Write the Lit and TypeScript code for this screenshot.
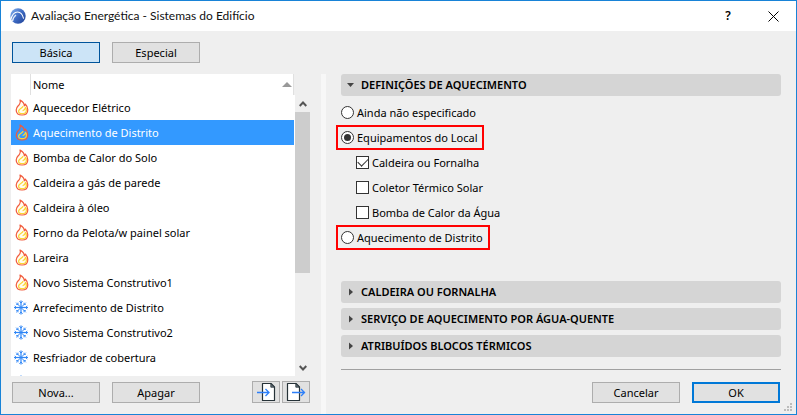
import { LitElement, html, svg, css } from "lit";
import { customElement, state } from "lit/decorators.js";
import { classMap } from "lit/directives/class-map.js";

type Kind = "heat" | "cool";
interface SystemRow {
  name: string;
  kind: Kind;
}

const SYSTEMS: SystemRow[] = [
  { name: "Aquecedor Elétrico", kind: "heat" },
  { name: "Aquecimento de Distrito", kind: "heat" },
  { name: "Bomba de Calor do Solo", kind: "heat" },
  { name: "Caldeira a gás de parede", kind: "heat" },
  { name: "Caldeira à óleo", kind: "heat" },
  { name: "Forno da Pelota/w painel solar", kind: "heat" },
  { name: "Lareira", kind: "heat" },
  { name: "Novo Sistema Construtivo1", kind: "heat" },
  { name: "Arrefecimento de Distrito", kind: "cool" },
  { name: "Novo Sistema Construtivo2", kind: "cool" },
  { name: "Resfriador de cobertura", kind: "cool" },
  { name: "", kind: "cool" },
];

const flame = (selected: boolean) => html`<svg width="14" height="17" viewBox="0 0 14 17" aria-hidden="true">
  <path d="M5 1C8 2.600 9.300 4.800 9.300 6.800C10 6.400 10.200 5.800 10.200 5C12 6.800 12.800 8.800 12.800 10.700C12.800 14 10.400 16 7 16C3.600 16 1.200 14 1.200 10.900C1.200 8.200 3 7 4.500 5.300C5.600 3.900 5.600 2.600 5 1Z"
    fill="${selected ? "#3399ff" : "#fffdf0"}" stroke="#f15a3c" stroke-width="1.200" stroke-linejoin="round"/>
  <path d="M8 7C8 9.200 4.200 9.400 3.600 12C3.600 13.700 5 14.700 7 14.700C9.600 14.700 11.400 13.200 11.400 10.900C11.400 9.900 11 9 10.500 8.400C10.300 10.200 9.500 11.200 7.600 11.800"
    fill="none" stroke="#fbd536" stroke-width="1.200" stroke-linejoin="round"/>
</svg>`;

const flake = html`<svg width="14" height="15" viewBox="0 0 14 15" aria-hidden="true">
  <g fill="none" stroke="#2f86f6">
    ${[0, 90, 180, 270].map(
      (a) => svg`<g transform="rotate(${a} 7 7.500)">
        <path stroke-width="1.200" d="M7 7.500V0.500"/>
        <path stroke-width="0.900" d="M5.300 1.300L7 3L8.700 1.300"/>
        <path stroke-width="1" d="M7 7.500L11.800 2.700"/>
        <path stroke-width="0.800" d="M10 2.600V4.500H11.900"/>
      </g>`
    )}
  </g>
</svg>`;

const pageIcon = (out: boolean) => html`<svg width="20" height="20" viewBox="0 0 20 20" aria-hidden="true">
  <path d="${out ? "M1.500 1.500H10L13.500 5V18.500H1.500Z" : "M6.500 1.500H15L18.500 5V18.500H6.500Z"}"
    fill="#fff" stroke="#263238" stroke-width="1.200" stroke-linejoin="round"/>
  <path d="${out ? "M9.800 1.500V5.200H13.500Z" : "M14.800 1.500V5.200H18.500Z"}" fill="#67727a" stroke="#263238" stroke-width="0.800"/>
  <path d="${out ? "M6 10.500H18.500M15 7L18.500 10.500L15 14" : "M1 10.500H13M9.500 7L13 10.500L9.500 14"}"
    fill="none" stroke="#2d7ff9" stroke-width="1.300"/>
</svg>`;

const logo = html`<svg width="16" height="16" viewBox="0 0 16 16" aria-hidden="true">
  <defs>
    <linearGradient id="globe" x1="0" y1="0" x2="1" y2="0.800">
      <stop offset="0" stop-color="#86b4f0"/>
      <stop offset="0.550" stop-color="#3f6cc4"/>
      <stop offset="1" stop-color="#23469c"/>
    </linearGradient>
  </defs>
  <circle cx="8" cy="8" r="7.700" fill="url(#globe)"/>
  <path d="M0.800 11.500C2 6.800 4.600 4 7.600 4C10.800 4 12.600 6.600 13.600 10.600" fill="none" stroke="#fff" stroke-width="1.100"/>
  <path d="M2.400 13.400C3 10.500 4.200 8.200 6 7" fill="none" stroke="#e4ecf9" stroke-width="1.400"/>
</svg>`;

@customElement("app-root")
export class AppRoot extends LitElement {
  @state() private selected = 1;
  @state() private source = "local";

  static styles = css`
    :host {
      display: block;
      font: 11px/16px "Noto Sans", "Open Sans", sans-serif;
      color: #000;
    }
    * { box-sizing: border-box; }
    svg { display: block; flex: none; }
    button, input { font: inherit; color: inherit; margin: 0; padding: 0; }
    .dialog {
      position: relative;
      display: flex;
      flex-direction: column;
      height: 100vh;
      border: 1px solid #1883d7;
      background: #efefef;
    }
    .titlebar {
      display: flex;
      align-items: center;
      flex: none;
      gap: 5px;
      height: 30px;
      padding: 0 11px 0 9px;
      background: #fff;
    }
    .title { flex: 1; margin: 0; font-family: Lato, "Noto Sans", sans-serif; font-size: 12px; font-weight: 400; color: #111; }
    .caption {
      display: grid;
      place-items: center;
      width: 24px;
      height: 24px;
      border: 0;
      background: none;
      font-size: 12px;
      font-weight: 600;
    }
    .captions { display: flex; gap: 21px; }
    .content { display: flex; flex: 1; min-height: 0; }
    .left {
      display: flex;
      flex-direction: column;
      flex: none;
      width: 320px;
      padding: 11px 11px 11px 10px;
    }
    .right {
      display: flex;
      flex-direction: column;
      flex: 1;
      min-width: 0;
      padding: 43px 15px 11px 15px;
    }
    .divider { flex: none; width: 5px; margin-top: 43px; background: #f7f7f7; }
    .row { display: flex; align-items: flex-end; gap: 12px; padding-left: 1px; }
    .btn {
      width: 88px;
      height: 21px;
      border: 1px solid #adadad;
      background: #e1e1e1;
      line-height: 16px;
    }
    .btn.active { border-color: #00549b; background: #cce4f7; }
    .btn.primary { border: 2px solid #0078d7; }
    .list { display: flex; flex: 1; min-height: 0; margin: 11px 0 5px; }
    .viewport { flex: 1; overflow: hidden; background: #fff; }
    table { width: 100%; border-collapse: separate; border-spacing: 0; table-layout: fixed; }
    th, td { padding: 0; text-align: left; font-weight: 400; white-space: nowrap; }
    th { height: 21px; border-right: 1px solid #e0e0e0; }
    td { height: 25px; }
    .icon-col { width: 20px; }
    td.icon-col { padding-left: 3px; }
    td.heat { padding-left: 4px; }
    .name-col { padding-left: 2px; }
    .head { display: flex; align-items: center; justify-content: space-between; padding-right: 1px; }
    tr.selected { background: #3399ff; color: #fff; }
    .scrollbar {
      display: flex;
      flex-direction: column;
      width: 16px;
      margin-top: 21px;
      border-left: 1px solid #fff;
    }
    .arrow { display: grid; place-items: center; height: 17px; }
    .track { flex: 1; }
    .thumb { height: 65%; background: #cdcdcd; }
    .tools { display: flex; gap: 2px; margin-left: auto; }
    .tool {
      display: grid;
      place-items: center;
      width: 28px;
      height: 22px;
      border: 1px solid #adadad;
      background: #e1e1e1;
    }
    .section {
      display: flex;
      align-items: center;
      flex: none;
      gap: 7px;
      width: 100%;
      height: 22px;
      padding: 0 6px;
      border: 0;
      border-radius: 3px;
      background: #d5d5d5;
      font-weight: 600;
      text-align: left;
    }
    .options {
      display: flex;
      flex-direction: column;
      align-items: flex-start;
      margin: 4px 0 0 -5px;
      padding: 0;
      border: 0;
    }
    .option {
      display: flex;
      align-items: center;
      gap: 3px;
      height: 25px;
      padding: 0 5px 0 3px;
      border: 2px solid transparent;
    }
    .option.marked { border-color: #ff0000; }
    .option.nested { margin-left: 15px; }
    .mark {
      appearance: none;
      display: grid;
      place-items: center;
      flex: none;
      width: 13px;
      height: 13px;
      border: 1px solid #333;
      background: #fff;
    }
    .mark[type="radio"] { border-radius: 50%; }
    .mark[type="radio"]:checked::before {
      content: "";
      width: 7px;
      height: 7px;
      border-radius: 50%;
      background: #333;
    }
    .mark[type="checkbox"]:checked::before {
      content: "";
      width: 9px;
      height: 5px;
      margin-bottom: 3px;
      border: solid #333;
      border-width: 0 0 1px 1px;
      transform: rotate(-45deg);
    }
    .sections { display: flex; flex-direction: column; gap: 5px; margin-top: auto; }
    .rule { width: 100%; height: 1px; margin: 12px 0; border: 0; background: #a0a0a0; }
    .footer { display: flex; justify-content: flex-end; gap: 12px; padding-right: 1px; }
    .grip { position: absolute; right: 4px; bottom: 3px; }
  `;

  private section(label: string, open = false) {
    return html`<button class="section" aria-expanded=${open ? "true" : "false"}>
      <svg width="7" height="8" viewBox="0 0 7 8" aria-hidden="true">
        <path d=${open ? "M0 2H7L3.5 6Z" : "M2 0.500V7.500L6 4Z"} fill="#444"/>
      </svg>
      <span>${label}</span>
    </button>`;
  }

  private radio(value: string, label: string, marked = false) {
    return html`<label class=${classMap({ option: true, marked })}>
      <input class="mark" type="radio" name="source" .checked=${this.source === value}
        @change=${() => (this.source = value)} />
      <span>${label}</span>
    </label>`;
  }

  private check(label: string, checked = false) {
    return html`<label class="option nested">
      <input class="mark" type="checkbox" ?checked=${checked} />
      <span>${label}</span>
    </label>`;
  }

  render() {
    return html`
      <div class="dialog" role="dialog" aria-labelledby="title">
        <header class="titlebar">
          ${logo}
          <h1 class="title" id="title">Avaliação Energética - Sistemas do Edifício</h1>
          <div class="captions">
            <button class="caption">?</button>
            <button class="caption" aria-label="Fechar">
              <svg width="11" height="11" viewBox="0 0 11 11"><path d="M0.500 0.500L10.500 10.500M10.500 0.500L0.500 10.500" stroke="#000"/></svg>
            </button>
          </div>
        </header>
        <div class="content">
          <section class="left">
            <div class="row">
              <button class="btn active">Básica</button>
              <button class="btn">Especial</button>
            </div>
            <div class="list">
              <div class="viewport">
                <table>
                  <thead>
                    <tr>
                      <th class="icon-col"></th>
                      <th class="name-col">
                        <div class="head">
                          <span>Nome</span>
                          <svg width="10" height="5" viewBox="0 0 10 5" aria-hidden="true"><path d="M0 5L5 0L10 5Z" fill="#999"/></svg>
                        </div>
                      </th>
                    </tr>
                  </thead>
                  <tbody>
                    ${SYSTEMS.map(
                      (s, i) => html`<tr class=${classMap({ selected: i === this.selected })} @click=${() => (this.selected = i)}>
                        <td class="icon-col ${s.kind}">${s.kind === "heat" ? flame(i === this.selected) : flake}</td>
                        <td class="name-col">${s.name}</td>
                      </tr>`
                    )}
                  </tbody>
                </table>
              </div>
              <div class="scrollbar" aria-hidden="true">
                <div class="arrow">
                  <svg width="8" height="6" viewBox="0 0 8 6"><path d="M0.700 5L4 1.500L7.300 5" fill="none" stroke="#555" stroke-width="2"/></svg>
                </div>
                <div class="track"><div class="thumb"></div></div>
                <div class="arrow">
                  <svg width="8" height="6" viewBox="0 0 8 6"><path d="M0.700 1L4 4.500L7.300 1" fill="none" stroke="#555" stroke-width="2"/></svg>
                </div>
              </div>
            </div>
            <div class="row">
              <button class="btn">Nova...</button>
              <button class="btn">Apagar</button>
              <div class="tools">
                <button class="tool" aria-label="Importar">${pageIcon(false)}</button>
                <button class="tool" aria-label="Exportar">${pageIcon(true)}</button>
              </div>
            </div>
          </section>
          <div class="divider"></div>
          <section class="right">
            ${this.section("DEFINIÇÕES DE AQUECIMENTO", true)}
            <fieldset class="options">
              ${this.radio("none", "Ainda não especificado")}
              ${this.radio("local", "Equipamentos do Local", true)}
              ${this.check("Caldeira ou Fornalha", true)}
              ${this.check("Coletor Térmico Solar")}
              ${this.check("Bomba de Calor da Água")}
              ${this.radio("district", "Aquecimento de Distrito", true)}
            </fieldset>
            <div class="sections">
              ${this.section("CALDEIRA OU FORNALHA")}
              ${this.section("SERVIÇO DE AQUECIMENTO POR ÁGUA-QUENTE")}
              ${this.section("ATRIBUÍDOS BLOCOS TÉRMICOS")}
            </div>
            <hr class="rule" />
            <div class="footer">
              <button class="btn">Cancelar</button>
              <button class="btn primary">OK</button>
            </div>
          </section>
        </div>
        <svg class="grip" width="8" height="8" viewBox="0 0 8 8" aria-hidden="true">
          <path d="M6 0h2v2h-2zM6 3h2v2h-2zM3 3h2v2h-2zM6 6h2v2h-2zM3 6h2v2h-2zM0 6h2v2h-2z" fill="#bcbcbc"/>
        </svg>
      </div>
    `;
  }
}
